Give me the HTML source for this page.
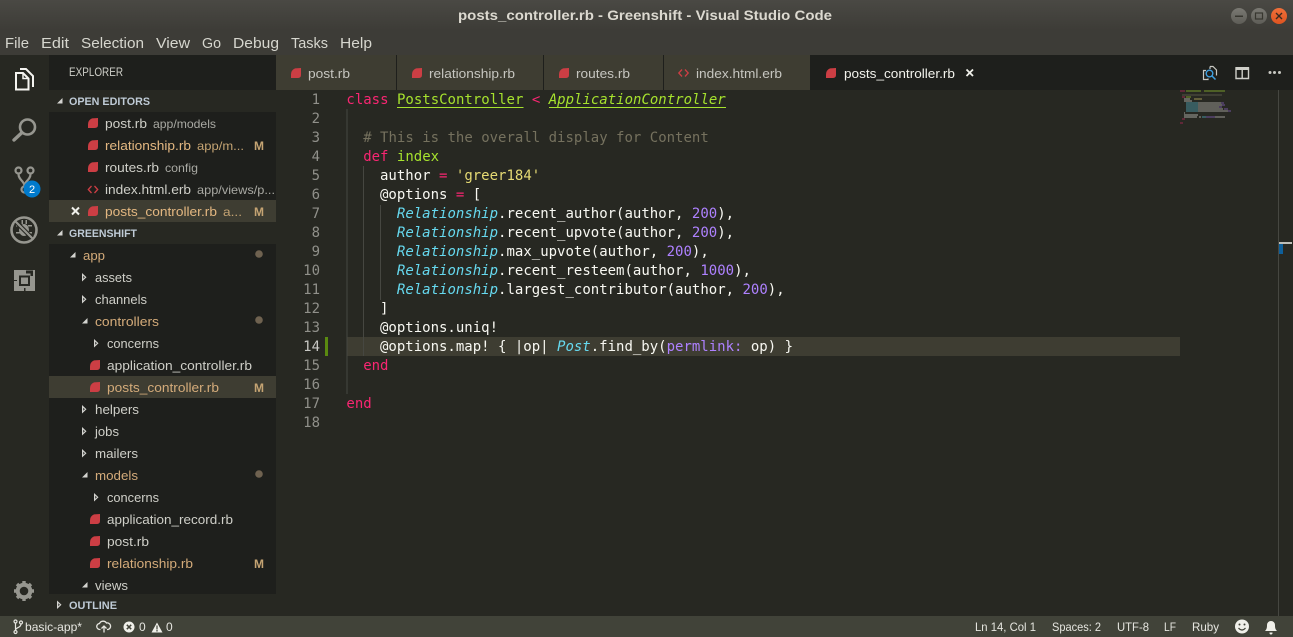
<!DOCTYPE html>
<html><head><meta charset="utf-8"><title>posts_controller.rb - Greenshift - Visual Studio Code</title>
<style>
html,body{margin:0;padding:0;width:1293px;height:637px;overflow:hidden;background:#272822}
svg{display:block;position:absolute;left:0;top:0}
.u{font-family:"Liberation Sans",sans-serif;font-size:13px;fill:#cfcfc8}
.m{fill:#e3b781}
.d{font-size:12px;fill:#a9a9a3}
.dm{font-size:12px;fill:#c5a473}
.b{font-weight:bold;font-size:11px;fill:#bfcbd6}
.c{font-family:"DejaVu Sans Mono",monospace;font-size:14px;fill:#f8f8f2;white-space:pre}
.n{text-anchor:end;fill:#90908a}
.k{fill:#f92672}.g{fill:#a6e22e}.i{font-style:italic}.q{fill:#66d9ef;font-style:italic}.s{fill:#e6db74}.p{fill:#ae81ff}.t{fill:#75715e}
.st{font-size:12px;fill:#e6e6e0}
.tab{fill:#c6c6c0}
.menu{font-size:14.5px;fill:#d6d6ce}
</style></head><body>
<svg width="1293" height="637" viewBox="0 0 1293 637" xmlns="http://www.w3.org/2000/svg">
<defs>
<linearGradient id="tb" x1="0" y1="0" x2="0" y2="1"><stop offset="0" stop-color="#4a4944"/><stop offset="1" stop-color="#3d3c37"/></linearGradient>
<linearGradient id="wb" x1="0" y1="0" x2="0" y2="1"><stop offset="0" stop-color="#7a7973"/><stop offset="1" stop-color="#5e5d57"/></linearGradient>
<linearGradient id="wc" x1="0" y1="0" x2="0" y2="1"><stop offset="0" stop-color="#f0703a"/><stop offset="1" stop-color="#de5420"/></linearGradient>
<path id="rb" d="M4 0.4L10 0V7Q10 10 6.500 10H0V6.500Q0 2.200 4 0.400Z" fill="#cc3e44"/>
<path id="tr" d="M0 0V8.500L4.500 4.250Z M1.300 2.800V5.700L2.800 4.250Z" fill="#d4d4d0" fill-rule="evenodd"/>
<path id="to" d="M5.500 0V5.500H0Z" fill="#d4d4d0"/>
<g id="erb" fill="none" stroke="#cc3e44" stroke-width="1.3"><path d="M4 1 L0.8 4.5 L4 8"/><path d="M7 1 L10.2 4.5 L7 8"/></g>
</defs>

<!-- chrome backgrounds -->
<rect width="1293" height="637" fill="#272822"/>
<rect width="1293" height="30" fill="url(#tb)"/>
<rect y="30" width="1293" height="25" fill="#3d3c37"/>
<rect y="55" width="49" height="561" fill="#272822"/>
<rect x="49" y="55" width="227" height="539" fill="#1e1f1c"/>
<rect x="49" y="90" width="227" height="22" fill="#272822"/>
<rect x="49" y="222" width="227" height="22" fill="#272822"/>
<rect x="49" y="594" width="227" height="22" fill="#272822"/>
<rect x="49" y="200" width="227" height="22" fill="#3e3d32"/>
<rect x="49" y="376" width="227" height="22" fill="#3e3d32"/>
<rect y="616" width="1293" height="21" fill="#414339"/>

<!-- title bar -->
<text x="458" y="20" textLength="374" lengthAdjust="spacingAndGlyphs" font-family="Liberation Sans" font-weight="bold" font-size="14" fill="#dcd9d0">posts_controller.rb - Greenshift - Visual Studio Code</text>
<circle cx="1239" cy="16" r="8" fill="url(#wb)"/><circle cx="1259" cy="16" r="8" fill="url(#wb)"/><circle cx="1279" cy="16" r="8" fill="url(#wc)"/>
<rect x="1235" y="15.5" width="8" height="1.5" fill="#37362f"/>
<rect x="1255.5" y="13" width="7" height="6" fill="none" stroke="#37362f" stroke-width="1.2"/>
<path d="M1276 13L1282 19M1282 13L1276 19" stroke="#3a2a20" stroke-width="1.4"/>

<!-- menu -->
<text class="u menu" x="5" y="48" textLength="24" lengthAdjust="spacingAndGlyphs">File</text>
<text class="u menu" x="41" y="48" textLength="28" lengthAdjust="spacingAndGlyphs">Edit</text>
<text class="u menu" x="81" y="48" textLength="63" lengthAdjust="spacingAndGlyphs">Selection</text>
<text class="u menu" x="156" y="48" textLength="34" lengthAdjust="spacingAndGlyphs">View</text>
<text class="u menu" x="202" y="48" textLength="19" lengthAdjust="spacingAndGlyphs">Go</text>
<text class="u menu" x="233" y="48" textLength="46" lengthAdjust="spacingAndGlyphs">Debug</text>
<text class="u menu" x="291" y="48" textLength="37" lengthAdjust="spacingAndGlyphs">Tasks</text>
<text class="u menu" x="340" y="48" textLength="32" lengthAdjust="spacingAndGlyphs">Help</text>

<!-- activity bar icons -->
<g fill="none" stroke="#f4f4f0" stroke-width="2">
<path d="M20 69H26L33 76V87"/>
<path d="M23 73H16V89.500H28.500V78.500Z" fill="#272822"/>
<path d="M23 73V78.500H28.500" stroke-width="1.500"/>
</g>
<g fill="none" stroke="#96968f" stroke-width="2.600">
<circle cx="27.500" cy="127" r="7.500"/><path d="M21.500 133L14 140" stroke-linecap="round" stroke-width="3.400"/>
</g>
<g fill="none" stroke="#96968f" stroke-width="2.200">
<circle cx="18.500" cy="170.500" r="3"/><circle cx="30.500" cy="170.500" r="3"/><circle cx="24.500" cy="189.500" r="3"/>
<path d="M18.500 174C18.500 180 24.500 181 24.500 186M30.500 174C30.500 180 24.500 181 24.500 186"/>
</g>
<circle cx="32" cy="189" r="8.500" fill="#007acc"/>
<text x="32" y="193" text-anchor="middle" font-family="Liberation Sans" font-size="11" fill="#fff">2</text>
<g fill="none" stroke="#96968f">
<circle cx="24" cy="230" r="12.500" stroke-width="2.600"/>
</g>
<g fill="#96968f"><ellipse cx="24" cy="230" rx="5" ry="6"/><path d="M16 225h4v1.500h-4zM16 232h4v1.500h-4zM28 225h4v1.500h-4zM28 232h4v1.500h-4zM21.500 220h1.500v4h-1.500zM25.500 220h1.500v4h-1.500z"/></g>
<path d="M16 222L32 238" stroke="#272822" stroke-width="4.400"/>
<path d="M15 221L33 239" stroke="#96968f" stroke-width="2.200"/>
<path d="M14 270H35V291H14Z" fill="#96968f"/>
<path d="M19 275.500H30V286H19Z" fill="#272822"/>
<path d="M21 277.500H28V284H21Z" fill="#96968f"/>
<path d="M26 270.500H33V276H30.500V273.500H26Z" fill="#272822"/>
<path d="M14 280H17V281H14ZM24 288H25.500V291H24Z" fill="#272822"/>
<g transform="translate(24,591)">
<circle r="6.300" fill="none" stroke="#96968f" stroke-width="4"/>
<g stroke="#96968f" stroke-width="3.400"><path d="M0 -10V-7M0 10V7M-10 0H-7M10 0H7M-7 -7L-5 -5M7 7L5 5M-7 7L-5 5M7 -7L5 -5"/></g>
</g>

<!-- sidebar -->
<text class="u" x="69" y="76" style="font-size:11.500px" textLength="54" lengthAdjust="spacingAndGlyphs">EXPLORER</text>
<use href="#to" x="57" y="98"/>
<text class="u b" x="69" y="105" textLength="81" lengthAdjust="spacingAndGlyphs">OPEN EDITORS</text>

<use href="#rb" x="88" y="118"/><text class="u" x="105" y="128" textLength="42" lengthAdjust="spacingAndGlyphs">post.rb</text><text class="u d" x="153" y="128" textLength="63" lengthAdjust="spacingAndGlyphs">app/models</text>
<use href="#rb" x="88" y="140"/><text class="u m" x="105" y="150" textLength="86" lengthAdjust="spacingAndGlyphs">relationship.rb</text><text class="u dm" x="197" y="150" textLength="47" lengthAdjust="spacingAndGlyphs">app/m...</text><text class="u m" x="254" y="150" font-weight="bold" style="font-size:12px;fill:#c5a473" textLength="10" lengthAdjust="spacingAndGlyphs">M</text>
<use href="#rb" x="88" y="162"/><text class="u" x="105" y="172" textLength="54" lengthAdjust="spacingAndGlyphs">routes.rb</text><text class="u d" x="165" y="172" textLength="33" lengthAdjust="spacingAndGlyphs">config</text>
<use href="#erb" x="87.500" y="185"/><text class="u" x="105" y="194" textLength="86" lengthAdjust="spacingAndGlyphs">index.html.erb</text><text class="u d" x="197" y="194" textLength="78" lengthAdjust="spacingAndGlyphs">app/views/p...</text>
<path d="M72 207.500L79 214.500M79 207.500L72 214.500" stroke="#f0f0ea" stroke-width="2"/>
<use href="#rb" x="88" y="206"/><text class="u m" x="105" y="216" textLength="112" lengthAdjust="spacingAndGlyphs">posts_controller.rb</text><text class="u dm" x="223" y="216" textLength="19" lengthAdjust="spacingAndGlyphs">a...</text><text class="u m" x="254" y="216" font-weight="bold" style="font-size:12px;fill:#c5a473" textLength="10" lengthAdjust="spacingAndGlyphs">M</text>

<use href="#to" x="57" y="230"/>
<text class="u b" x="69" y="237" textLength="68" lengthAdjust="spacingAndGlyphs">GREENSHIFT</text>

<use href="#to" x="70" y="252"/><text class="u m" x="83" y="260" style="fill:#d4ab7a" textLength="22" lengthAdjust="spacingAndGlyphs">app</text><circle cx="259" cy="254" r="3.800" fill="#6f6250"/>
<use href="#tr" x="82" y="273"/><text class="u" x="95" y="282" textLength="37" lengthAdjust="spacingAndGlyphs">assets</text>
<use href="#tr" x="82" y="295"/><text class="u" x="95" y="304" textLength="52" lengthAdjust="spacingAndGlyphs">channels</text>
<use href="#to" x="82" y="318"/><text class="u m" x="95" y="326" style="fill:#d4ab7a" textLength="64" lengthAdjust="spacingAndGlyphs">controllers</text><circle cx="259" cy="320" r="3.800" fill="#6f6250"/>
<use href="#tr" x="94" y="339"/><text class="u" x="107" y="348" textLength="52" lengthAdjust="spacingAndGlyphs">concerns</text>
<use href="#rb" x="90" y="360"/><text class="u" x="107" y="370" textLength="145" lengthAdjust="spacingAndGlyphs">application_controller.rb</text>
<use href="#rb" x="90" y="382"/><text class="u m" x="107" y="392" style="fill:#d4ab7a" textLength="112" lengthAdjust="spacingAndGlyphs">posts_controller.rb</text><text class="u" x="254" y="392" font-weight="bold" style="font-size:12px;fill:#c5a473" textLength="10" lengthAdjust="spacingAndGlyphs">M</text>
<use href="#tr" x="82" y="405"/><text class="u" x="95" y="414" textLength="44" lengthAdjust="spacingAndGlyphs">helpers</text>
<use href="#tr" x="82" y="427"/><text class="u" x="95" y="436" textLength="24" lengthAdjust="spacingAndGlyphs">jobs</text>
<use href="#tr" x="82" y="449"/><text class="u" x="95" y="458" textLength="43" lengthAdjust="spacingAndGlyphs">mailers</text>
<use href="#to" x="82" y="472"/><text class="u m" x="95" y="480" style="fill:#d4ab7a" textLength="43" lengthAdjust="spacingAndGlyphs">models</text><circle cx="259" cy="474" r="3.800" fill="#6f6250"/>
<use href="#tr" x="94" y="493"/><text class="u" x="107" y="502" textLength="52" lengthAdjust="spacingAndGlyphs">concerns</text>
<use href="#rb" x="90" y="514"/><text class="u" x="107" y="524" textLength="126" lengthAdjust="spacingAndGlyphs">application_record.rb</text>
<use href="#rb" x="90" y="536"/><text class="u" x="107" y="546" textLength="42" lengthAdjust="spacingAndGlyphs">post.rb</text>
<use href="#rb" x="90" y="558"/><text class="u m" x="107" y="568" style="fill:#d4ab7a" textLength="86" lengthAdjust="spacingAndGlyphs">relationship.rb</text><text class="u" x="254" y="568" font-weight="bold" style="font-size:12px;fill:#c5a473" textLength="10" lengthAdjust="spacingAndGlyphs">M</text>
<use href="#to" x="82" y="582"/><text class="u" x="95" y="590" textLength="33" lengthAdjust="spacingAndGlyphs">views</text>

<use href="#tr" x="57" y="600.500"/>
<text class="u b" x="69" y="609" textLength="48" lengthAdjust="spacingAndGlyphs">OUTLINE</text>

<!-- tabs -->
<rect x="276" y="55" width="1017" height="35" fill="#1e1f1c"/>
<rect x="276" y="55" width="120" height="35" fill="#3e3d32"/>
<rect x="397" y="55" width="146" height="35" fill="#3e3d32"/>
<rect x="544" y="55" width="119" height="35" fill="#3e3d32"/>
<rect x="664" y="55" width="146" height="35" fill="#3e3d32"/>
<use href="#rb" x="291" y="68"/><text class="u tab" x="308" y="78" textLength="42" lengthAdjust="spacingAndGlyphs">post.rb</text>
<use href="#rb" x="412" y="68"/><text class="u tab" x="429" y="78" textLength="86" lengthAdjust="spacingAndGlyphs">relationship.rb</text>
<use href="#rb" x="559" y="68"/><text class="u tab" x="576" y="78" textLength="54" lengthAdjust="spacingAndGlyphs">routes.rb</text>
<use href="#erb" x="678" y="68.500"/><text class="u tab" x="696" y="78" textLength="86" lengthAdjust="spacingAndGlyphs">index.html.erb</text>
<use href="#rb" x="826" y="68"/><text class="u" x="844" y="78" style="fill:#f2f2ec" textLength="111" lengthAdjust="spacingAndGlyphs">posts_controller.rb</text>
<path d="M966.500 69.500L973 76M973 69.500L966.500 76" stroke="#f0f0ea" stroke-width="1.800"/>

<!-- tab actions -->
<path d="M1208 78.500V79.500H1203.500V70.500H1206M1210 66.500H1213L1216.500 70V75.500M1210 66.500V69" fill="none" stroke="#c8c8c2" stroke-width="1.200"/>
<circle cx="1209.500" cy="73.500" r="3.300" fill="none" stroke="#3f9fe0" stroke-width="1.400"/>
<path d="M1212 76L1215.500 79.500" stroke="#3f9fe0" stroke-width="1.500"/>
<path d="M1236 68H1248.500V78.500H1236ZM1242.200 70V78.500" fill="none" stroke="#cfcfc9" stroke-width="1.400"/>
<rect x="1235.500" y="67" width="13.500" height="3" fill="#cfcfc9"/>
<circle cx="1270" cy="72.500" r="1.500" fill="#c8c8c2"/><circle cx="1274.500" cy="72.500" r="1.500" fill="#c8c8c2"/><circle cx="1279.500" cy="72.500" r="1.500" fill="#c8c8c2"/>

<!-- editor -->
<rect x="347" y="337" width="833" height="19" fill="#3e3d32"/>
<rect x="325" y="337" width="3" height="19" fill="#5a8a10"/>
<rect x="346.500" y="109" width="1" height="285" fill="#464741"/>
<rect x="363" y="166" width="1" height="190" fill="#464741"/>
<rect x="380" y="205" width="1" height="95" fill="#464741"/>
<rect x="1278" y="90" width="1" height="526" fill="#464741"/>
<rect x="1279" y="242" width="13" height="2" fill="#bdbdb7"/>
<rect x="1279" y="244" width="4" height="10" fill="#0e5f9a"/>

<g class="c">
<text class="c n" x="320" y="104">1</text>
<text class="c n" x="320" y="123">2</text>
<text class="c n" x="320" y="142">3</text>
<text class="c n" x="320" y="161">4</text>
<text class="c n" x="320" y="180">5</text>
<text class="c n" x="320" y="199">6</text>
<text class="c n" x="320" y="218">7</text>
<text class="c n" x="320" y="237">8</text>
<text class="c n" x="320" y="256">9</text>
<text class="c n" x="320" y="275">10</text>
<text class="c n" x="320" y="294">11</text>
<text class="c n" x="320" y="313">12</text>
<text class="c n" x="320" y="332">13</text>
<text class="c n" x="320" y="351" style="fill:#c8c8c4">14</text>
<text class="c n" x="320" y="370">15</text>
<text class="c n" x="320" y="389">16</text>
<text class="c n" x="320" y="408">17</text>
<text class="c n" x="320" y="427">18</text>

<text class="c" x="346.400" y="104" xml:space="preserve"><tspan class="k">class</tspan> <tspan class="g">PostsController</tspan> <tspan class="k">&lt;</tspan> <tspan class="g i">ApplicationController</tspan></text>
<rect x="397" y="107" width="126.500" height="1" fill="#a6e22e"/>
<rect x="549" y="107" width="177" height="1" fill="#a6e22e"/>
<text class="c t" x="363.200" y="142" xml:space="preserve"># This is the overall display for Content</text>
<text class="c" x="363.200" y="161" xml:space="preserve"><tspan class="k">def</tspan> <tspan class="g">index</tspan></text>
<text class="c" x="380" y="180" xml:space="preserve">author <tspan class="k">=</tspan> <tspan class="s">'greer184'</tspan></text>
<text class="c" x="380" y="199" xml:space="preserve">@options <tspan class="k">=</tspan> [</text>
<text class="c" x="396.900" y="218" xml:space="preserve"><tspan class="q">Relationship</tspan>.recent_author(author, <tspan class="p">200</tspan>),</text>
<text class="c" x="396.900" y="237" xml:space="preserve"><tspan class="q">Relationship</tspan>.recent_upvote(author, <tspan class="p">200</tspan>),</text>
<text class="c" x="396.900" y="256" xml:space="preserve"><tspan class="q">Relationship</tspan>.max_upvote(author, <tspan class="p">200</tspan>),</text>
<text class="c" x="396.900" y="275" xml:space="preserve"><tspan class="q">Relationship</tspan>.recent_resteem(author, <tspan class="p">1000</tspan>),</text>
<text class="c" x="396.900" y="294" xml:space="preserve"><tspan class="q">Relationship</tspan>.largest_contributor(author, <tspan class="p">200</tspan>),</text>
<text class="c" x="380" y="313">]</text>
<text class="c" x="380" y="332">@options.uniq!</text>
<text class="c" x="380" y="351" xml:space="preserve">@options.map! { |op| <tspan class="q">Post</tspan>.find_by(<tspan class="p">permlink:</tspan> op) }</text>
<text class="c k" x="363.200" y="370">end</text>
<text class="c k" x="346.400" y="408">end</text>
</g>

<!-- minimap -->
<g opacity=".7">
<path d="M1180 90.500h5v1h-5z" fill="#c92a62"/>
<path d="M1186 90.500h15v1h-15zM1204 90.500h21v1h-21z" fill="#95c92c"/>
<path d="M1182 94.500h40v1h-40z" fill="#6a6655"/>
<path d="M1182 96.500h3v1h-3z" fill="#c92a62"/><path d="M1186 96.500h5v1h-5z" fill="#95c92c"/>
<path d="M1184 98.500h6v1h-6zM1184 100.500h8v1h-8z" fill="#d8d8d2"/><path d="M1194 98.500h8v1h-8z" fill="#cfc468"/>
<g fill="#58bdd2"><path d="M1186 102.500h12v1h-12zM1186 104.500h12v1h-12zM1186 106.500h12v1h-12zM1186 108.500h12v1h-12zM1186 110.500h12v1h-12z"/></g>
<g fill="#c8c8c2"><path d="M1198 102.500h23v1h-23zM1198 104.500h24v1h-24zM1198 106.500h21v1h-21zM1198 108.500h25v1h-25zM1198 110.500h30v1h-30z"/></g>
<g fill="#8f69d0"><path d="M1221 102.500h3v1h-3zM1222 104.500h3v1h-3zM1219 106.500h3v1h-3zM1224 108.500h4v1h-4zM1228 110.500h3v1h-3z"/></g>
<path d="M1184 112.500h1v1h-1zM1184 114.500h14v1h-14zM1184 116.500h13v1h-13z" fill="#d8d8d2"/>
<path d="M1199 116.500h2v1h-2zM1215 116.500h10v1h-10z" fill="#c8c8c2"/><path d="M1202 116.500h4v1h-4z" fill="#58bdd2"/><path d="M1206 116.500h9v1h-9z" fill="#8f69d0"/>
<path d="M1182 118.500h3v1h-3zM1180 122.500h3v1h-3z" fill="#c92a62"/>
</g>

<!-- status bar -->
<g fill="none" stroke="#e6e6e0" stroke-width="1.200"><circle cx="15.500" cy="621.500" r="1.500"/><circle cx="15.500" cy="632" r="1.500"/><circle cx="21" cy="622.500" r="1.500"/><path d="M15.500 623V630.500M21 624C21 628 16 627 15.500 630"/></g>
<text class="u st" x="25" y="631" textLength="57" lengthAdjust="spacingAndGlyphs">basic-app*</text>
<path d="M100.500 629.500H100A3 3 0 0 1 99.500 623.500A4 4 0 0 1 106.500 623A3.300 3.300 0 0 1 108 629.500H107" fill="none" stroke="#e6e6e0" stroke-width="1.300"/>
<path d="M104 632.500V626M101.500 628.500L104 626L106.500 628.500" fill="none" stroke="#e6e6e0" stroke-width="1.300"/>
<circle cx="129" cy="627" r="5.500" fill="#f0f0ea"/><path d="M126.800 624.800L131.200 629.200M131.200 624.800L126.800 629.200" stroke="#414339" stroke-width="1.500"/>
<text class="u st" x="139" y="631">0</text>
<path d="M157 622.500L162.500 632.500H151.500Z" fill="#f0f0ea"/><path d="M157 625.500V629.500M157 630V631.500" stroke="#414339" stroke-width="1.200"/>
<text class="u st" x="166" y="631">0</text>
<text class="u st" x="975" y="631" textLength="61" lengthAdjust="spacingAndGlyphs">Ln 14, Col 1</text>
<text class="u st" x="1052" y="631" textLength="49" lengthAdjust="spacingAndGlyphs">Spaces: 2</text>
<text class="u st" x="1117" y="631" textLength="32" lengthAdjust="spacingAndGlyphs">UTF-8</text>
<text class="u st" x="1164" y="631" textLength="12" lengthAdjust="spacingAndGlyphs">LF</text>
<text class="u st" x="1192" y="631" textLength="27" lengthAdjust="spacingAndGlyphs">Ruby</text>
<circle cx="1242" cy="626.500" r="7" fill="#f0f0ea"/>
<circle cx="1239.500" cy="624.500" r="1" fill="#414339"/><circle cx="1244.500" cy="624.500" r="1" fill="#414339"/>
<path d="M1238.500 628Q1242 632 1245.500 628" fill="none" stroke="#414339" stroke-width="1.200"/>
<path d="M1265 631C1267 629 1267 627 1267 625A4 4 0 0 1 1275 625C1275 627 1275 629 1277 631Z" fill="#f0f0ea"/>
<path d="M1269.500 632.500H1272.500V633A1.500 1.500 0 0 1 1269.500 633Z" fill="#f0f0ea"/>
</svg>
</body></html>
